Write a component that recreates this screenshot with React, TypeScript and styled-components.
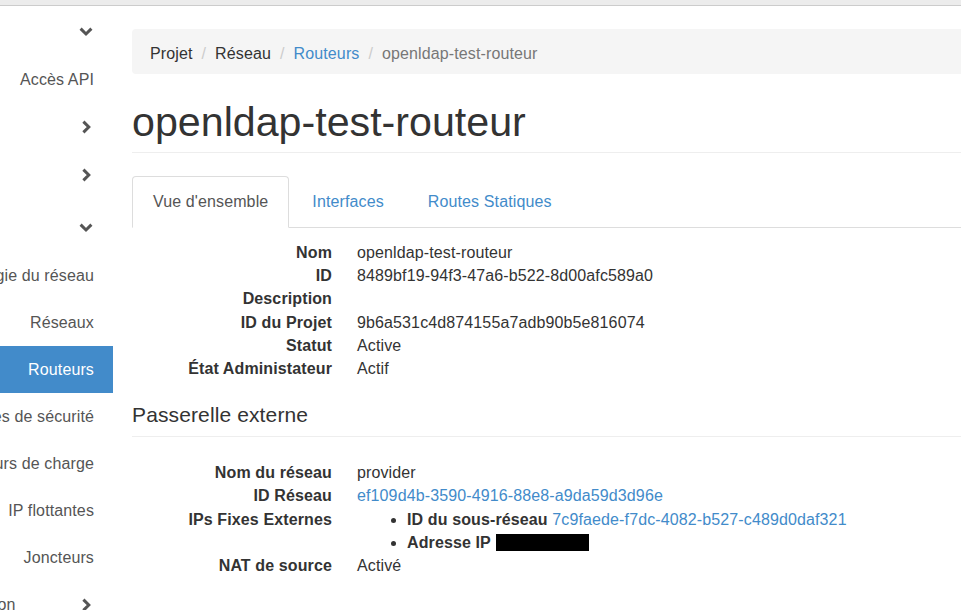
import React from 'react';
import styled, { createGlobalStyle } from 'styled-components';

const GlobalStyle = createGlobalStyle`
  html, body {
    margin: 0;
    padding: 0;
    background: #fff;
  }
  body {
    font-family: "Liberation Sans", Arial, sans-serif;
    font-size: 16px;
    letter-spacing: 0.12px;
    color: #333;
    overflow: hidden;
  }
  * {
    box-sizing: border-box;
  }
`;

type NavEntry =
  | { kind: 'group'; label: string; open: boolean; gap?: boolean }
  | { kind: 'panel'; label: string; active?: boolean };

const nav: NavEntry[] = [
  { kind: 'group', label: 'Projet', open: true },
  { kind: 'panel', label: 'Accès API' },
  { kind: 'group', label: 'Calcul', open: false },
  { kind: 'group', label: 'Volumes', open: false },
  { kind: 'group', label: 'Réseau', open: true, gap: true },
  { kind: 'panel', label: 'Topologie du réseau' },
  { kind: 'panel', label: 'Réseaux' },
  { kind: 'panel', label: 'Routeurs', active: true },
  { kind: 'panel', label: 'Groupes de sécurité' },
  { kind: 'panel', label: 'Répartiteurs de charge' },
  { kind: 'panel', label: 'IP flottantes' },
  { kind: 'panel', label: 'Joncteurs' },
  { kind: 'group', label: 'Orchestration', open: false },
];

const overview = [
  { label: 'Nom', value: 'openldap-test-routeur' },
  { label: 'ID', value: '8489bf19-94f3-47a6-b522-8d00afc589a0' },
  { label: 'Description', value: '' },
  { label: 'ID du Projet', value: '9b6a531c4d874155a7adb90b5e816074' },
  { label: 'Statut', value: 'Active' },
  { label: 'État Administateur', value: 'Actif' },
];

const Chevron = ({ open }: { open: boolean }) => (
  <ChevronBox>
    <svg width="14" height="14" viewBox="0 0 14 14">
      {open ? (
        <polyline points="1.6,3.6 7,9 12.4,3.6" fill="none" stroke="#555" strokeWidth="3" />
      ) : (
        <polyline points="4.4,1.6 9.8,7 4.4,12.4" fill="none" stroke="#555" strokeWidth="3" />
      )}
    </svg>
  </ChevronBox>
);

const App = () => {
  return (
    <>
      <GlobalStyle />
      <TopStrip />
      <Layout>
        <Sidebar>
          <SidebarInner>
            {nav.map((entry) =>
              entry.kind === 'group' ? (
                <GroupRow key={entry.label} $gap={entry.gap}>
                  <span>{entry.label}</span>
                  <Chevron open={entry.open} />
                </GroupRow>
              ) : (
                <PanelRow key={entry.label} $active={entry.active}>
                  {entry.label}
                </PanelRow>
              ),
            )}
          </SidebarInner>
        </Sidebar>

        <Main>
          <Breadcrumb>
            <Crumb>Projet</Crumb>
            <Sep>/</Sep>
            <Crumb>Réseau</Crumb>
            <Sep>/</Sep>
            <CrumbLink>Routeurs</CrumbLink>
            <Sep>/</Sep>
            <Crumb $current>openldap-test-routeur</Crumb>
          </Breadcrumb>

          <PageHeader>
            <Title>openldap-test-routeur</Title>
          </PageHeader>

          <Tabs>
            <Tab $active>Vue d'ensemble</Tab>
            <Tab>Interfaces</Tab>
            <Tab>Routes Statiques</Tab>
          </Tabs>

          <Details>
            {overview.map((row) => (
              <React.Fragment key={row.label}>
                <Term>{row.label}</Term>
                <Desc>{row.value}</Desc>
              </React.Fragment>
            ))}
          </Details>

          <SectionTitle>Passerelle externe</SectionTitle>

          <Details $afterTitle>
            <Term>Nom du réseau</Term>
            <Desc>provider</Desc>
            <Term>ID Réseau</Term>
            <Desc>
              <Link>ef109d4b-3590-4916-88e8-a9da59d3d96e</Link>
            </Desc>
            <Term>IPs Fixes Externes</Term>
            <Desc>
              <IpList>
                <li>
                  <strong>ID du sous-réseau</strong> <Link>7c9faede-f7dc-4082-b527-c489d0daf321</Link>
                </li>
                <li>
                  <strong>Adresse IP</strong> <Redacted />
                </li>
              </IpList>
            </Desc>
            <Term>NAT de source</Term>
            <Desc>Activé</Desc>
          </Details>
        </Main>
      </Layout>
    </>
  );
};

const TopStrip = styled.div`
  height: 6px;
  background: #ececec;
  border-bottom: 1px solid #cccccc;
`;

const Layout = styled.div`
  display: flex;
  width: 100vw;
  height: 604px;
  overflow: hidden;
`;

const Sidebar = styled.nav`
  flex: 0 0 113px;
  overflow: hidden;
  padding-top: 2px;
`;

const SidebarInner = styled.div`
  width: 230px;
  margin-left: -117px;
`;

const GroupRow = styled.div<{ $gap?: boolean }>`
  display: flex;
  align-items: center;
  justify-content: space-between;
  height: 48px;
  margin-top: ${(p) => (p.$gap ? '5px' : '0')};
  padding: 0 20px 0 35px;
  color: #555;
  white-space: nowrap;
`;

const ChevronBox = styled.span`
  display: flex;
  width: 14px;
  height: 14px;
`;

const PanelRow = styled.div<{ $active?: boolean }>`
  height: 47px;
  line-height: 47px;
  padding-right: 19px;
  text-align: right;
  white-space: nowrap;
  color: ${(p) => (p.$active ? '#fff' : '#555')};
  background: ${(p) => (p.$active ? '#428bca' : 'transparent')};
`;

const Main = styled.main`
  flex: 0 0 900px;
  padding: 23px 0 0 19px;
`;

const Breadcrumb = styled.div`
  display: flex;
  align-items: center;
  padding: 13px 18px 9px;
  line-height: 23px;
  background: #f5f5f5;
  border-radius: 4px;
  white-space: nowrap;
`;

const Crumb = styled.span<{ $current?: boolean }>`
  color: ${(p) => (p.$current ? '#777' : '#333')};
`;

const CrumbLink = styled.span`
  color: #428bca;
`;

const Sep = styled.span`
  margin: 0 9px;
  color: #ccc;
`;

const PageHeader = styled.div`
  margin-top: 26px;
  padding-bottom: 7px;
  border-bottom: 1px solid #eee;
`;

const Title = styled.h1`
  margin: 0;
  font-size: 41.2px;
  font-weight: 400;
  letter-spacing: 0;
  line-height: 45px;
  color: #333;
`;

const Tabs = styled.div`
  display: flex;
  margin-top: 23px;
  border-bottom: 1px solid #ddd;
`;

const Tab = styled.div<{ $active?: boolean }>`
  margin-right: 2px;
  margin-bottom: -1px;
  padding: 13px 20px 14px;
  line-height: 23px;
  border: 1px solid ${(p) => (p.$active ? '#ddd' : 'transparent')};
  border-bottom-color: ${(p) => (p.$active ? '#fff' : 'transparent')};
  border-radius: 4px 4px 0 0;
  background: ${(p) => (p.$active ? '#fff' : 'transparent')};
  color: ${(p) => (p.$active ? '#555' : '#428bca')};
`;

const Details = styled.div<{ $afterTitle?: boolean }>`
  display: grid;
  grid-template-columns: 200px 1fr;
  column-gap: 25px;
  margin-top: ${(p) => (p.$afterTitle ? '24px' : '13px')};
  line-height: 23.2px;
`;

const Term = styled.div`
  font-weight: 700;
  text-align: right;
  white-space: nowrap;
`;

const Desc = styled.div`
  min-height: 23.2px;
  white-space: nowrap;
`;

const Link = styled.span`
  color: #428bca;
`;

const SectionTitle = styled.h3`
  margin: 23px 0 0;
  padding-bottom: 10px;
  font-size: 21px;
  font-weight: 400;
  line-height: 23px;
  border-bottom: 1px solid #eee;
`;

const IpList = styled.ul`
  margin: 0;
  padding-left: 50px;
  list-style: disc;
  & li::marker {
    font-size: 15px;
  }
`;

const Redacted = styled.span`
  display: inline-block;
  width: 93px;
  height: 17px;
  vertical-align: -3px;
  background: #000;
`;

export default App;
